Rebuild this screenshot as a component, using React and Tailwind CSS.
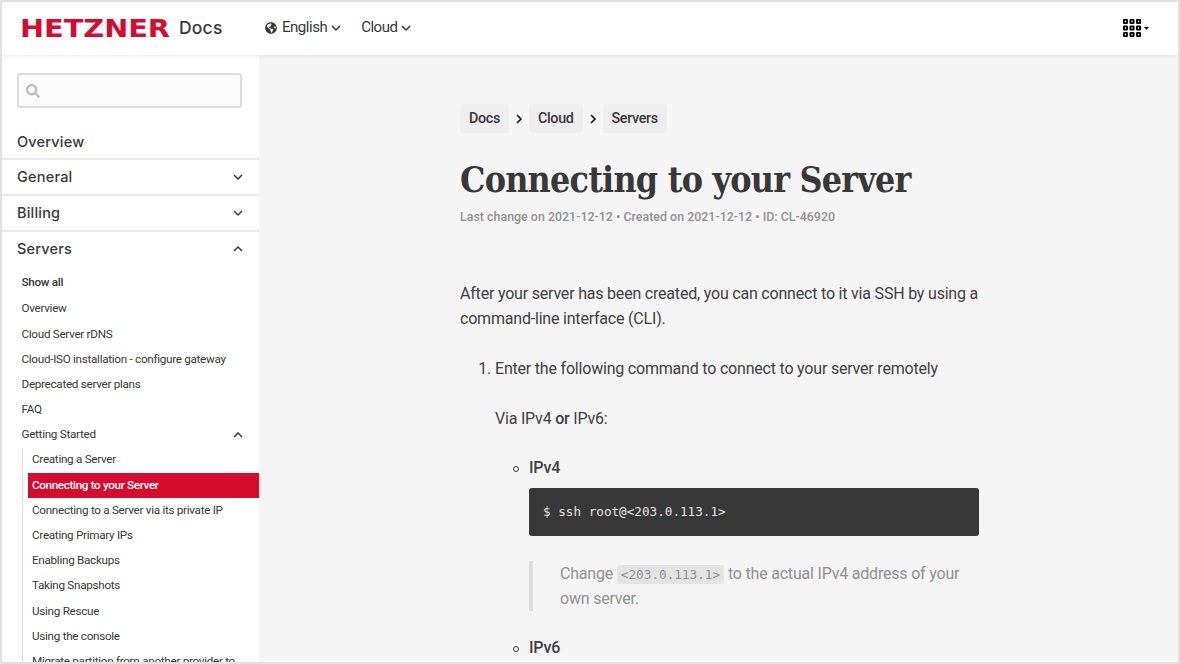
import React from "react";
import { FaSearch, FaGlobeAmericas, FaCaretDown } from "react-icons/fa";

const sections = ["General", "Billing"];

const serverPages = [
  "Overview",
  "Cloud Server rDNS",
  "Cloud-ISO installation - configure gateway",
  "Deprecated server plans",
  "FAQ",
];

const gettingStarted = [
  "Creating a Server",
  "Connecting to your Server",
  "Connecting to a Server via its private IP",
  "Creating Primary IPs",
  "Enabling Backups",
  "Taking Snapshots",
  "Using Rescue",
  "Using the console",
  "Migrate partition from another provider to",
];

function Chevron({ className = "" }) {
  return (
    <svg viewBox="0 0 10 10" className={`h-[10px] w-[10px] shrink-0 ${className}`}>
      <path d="M1 3 L5 7 L9 3" fill="none" stroke="currentColor" strokeWidth="1.5" />
    </svg>
  );
}

function Logo() {
  return (
    <svg width="148" height="20" className="overflow-visible">
      <text
        x="-1"
        y="19"
        textLength="150"
        lengthAdjust="spacingAndGlyphs"
        fill="#d50c2d"
        className="font-['DejaVu_Sans',sans-serif] text-[25px] font-bold"
      >
        HETZNER
      </text>
    </svg>
  );
}

function GridIcon() {
  return (
    <svg width="18" height="18" viewBox="0 0 18 18">
      {[0, 6.5, 13].map((y) =>
        [0, 6.5, 13].map((x) => (
          <rect
            key={`${x}-${y}`}
            x={x + 0.9}
            y={y + 0.9}
            width="3.2"
            height="3.2"
            rx="0.4"
            fill="none"
            stroke="#000"
            strokeWidth="1.9"
          />
        ))
      )}
    </svg>
  );
}

function Header() {
  return (
    <header className="relative z-10 flex h-[53px] shrink-0 items-center bg-white pr-[29px] pb-[2px] pl-[19px] shadow-[0_1px_4px_rgba(0,0,0,0.08)]">
      <Logo />
      <span className="ml-[10px] w-[86px] font-[Inter,sans-serif] text-[17.5px] leading-6 font-medium tracking-[0.2px]">
        Docs
      </span>
      <button className="flex items-center text-[15px] tracking-[-0.48px]">
        <FaGlobeAmericas className="mr-[5px] h-[12px] w-[12px]" />
        English
        <Chevron className="ml-[4px]" />
      </button>
      <button className="ml-5 flex items-center text-[15px] tracking-[-0.48px]">
        Cloud
        <Chevron className="ml-[4px]" />
      </button>
      <button className="ml-auto flex items-center gap-[3px] text-black">
        <GridIcon />
        <FaCaretDown className="h-[8px] w-[5px]" />
      </button>
    </header>
  );
}

function SectionTitle({ title, icon }) {
  return (
    <div className="flex h-[33px] items-center justify-between pr-[16px] pl-[15px] font-[Inter,sans-serif] text-[14.5px] font-medium tracking-[0.2px]">
      {title}
      {icon}
    </div>
  );
}

function Sidebar() {
  return (
    <aside className="w-[257px] shrink-0 overflow-hidden bg-white">
      <div className="mt-[18px] mr-[17px] ml-[15px] flex h-[35px] items-center rounded-[3px] border-2 border-[#dcdcdc] bg-[#fafafa] pl-[7px]">
        <FaSearch className="h-[14px] w-[14px] text-[#bcbcbc]" />
      </div>

      <div className="mt-4">
        <div className="h-[36px] border-b-2 border-[#ebebeb] pt-[1px]">
          <SectionTitle title="Overview" />
        </div>
        {sections.map((title) => (
          <div key={title} className="h-[36px] border-b-2 border-[#ebebeb]">
            <SectionTitle title={title} icon={<Chevron />} />
          </div>
        ))}
        <SectionTitle title="Servers" icon={<Chevron className="rotate-180" />} />
      </div>

      <nav className="text-[11.7px] tracking-[-0.29px]">
        <div className="mt-[3.5px] flex h-[28px] items-center pl-[19.5px] font-medium">Show all</div>
        {serverPages.map((page) => (
          <div key={page} className="flex h-[25.2px] items-center pl-[19.5px] whitespace-nowrap">
            {page}
          </div>
        ))}
        <div className="flex h-[25.2px] items-center justify-between pr-[16px] pl-[19.5px]">
          Getting Started
          <Chevron className="rotate-180" />
        </div>
        <div className="ml-[20px] border-l border-[#dedede] pl-[5px]">
          {gettingStarted.map((page) => (
            <div
              key={page}
              className={`flex h-[25.2px] items-center pl-[4px] whitespace-nowrap ${
                page === "Connecting to your Server" ? "bg-[#d50c2d] font-medium tracking-[-0.35px] text-white" : ""
              }`}
            >
              {page}
            </div>
          ))}
        </div>
      </nav>
    </aside>
  );
}

function Breadcrumbs() {
  return (
    <div className="flex items-center text-[14.3px] font-medium tracking-[-0.32px]">
      {["Docs", "Cloud", "Servers"].map((crumb, index) => (
        <React.Fragment key={crumb}>
          {index > 0 && <Chevron className="mx-[5px] -rotate-90 text-black" />}
          <a className="flex h-[29px] items-center rounded-[3px] bg-[#eeeeee] px-[9px]">{crumb}</a>
        </React.Fragment>
      ))}
    </div>
  );
}

function BulletTitle({ title }) {
  return (
    <div className="flex items-center pl-[18px] font-medium">
      <span className="mt-[2px] mr-[10px] h-[6px] w-[6px] rounded-full border border-[#383838]" />
      {title}
    </div>
  );
}

function Article() {
  return (
    <main className="flex-1 overflow-hidden bg-[#f5f5f5] pt-[49px] pl-[201px]">
      <div className="w-[521px]">
        <Breadcrumbs />
        <h1 className="mt-[22px] font-['DejaVu_Serif_Condensed','DejaVu_Serif',serif] text-[35.5px] leading-[50px] font-bold tracking-[-0.8px] whitespace-nowrap">
          Connecting to your Server
        </h1>
        <p className="mt-[2px] text-[12.4px] leading-[20px] font-medium tracking-[0.02px] whitespace-nowrap text-[#919191]">
          Last change on 2021-12-12 • Created on 2021-12-12 • ID: CL-46920
        </p>

        <div className="mt-[54px] text-[16px] leading-[25px] tracking-[-0.2px] text-[#404040]">
          <p>After your server has been created, you can connect to it via SSH by using a command-line interface (CLI).</p>
          <div className="mt-[25px] flex">
            <span className="w-[35px] pr-[4px] text-right">1.</span>
            <div className="flex-1">
              <p>Enter the following command to connect to your server remotely</p>
              <p className="mt-[25px]">
                Via IPv4 <b className="font-medium">or</b> IPv6:
              </p>
              <ul className="mt-[24px]">
                <li>
                  <BulletTitle title="IPv4" />
                  <pre className="mt-[8px] mr-[2px] ml-[34px] flex h-[48px] items-center rounded-[3px] bg-[#383838] pb-[1px] pl-[14px] font-['DejaVu_Sans_Mono',monospace] text-[12.65px] tracking-normal text-[#e4e4e4]">
                    $ ssh root@&lt;203.0.113.1&gt;
                  </pre>
                  <blockquote className="mt-[25px] ml-[34px] border-l-[4px] border-[#dddddd] pl-[27px] text-[#919191]">
                    Change{" "}
                    <code className="rounded-[3px] bg-[#e3e3e3] px-[4px] py-[2px] font-['DejaVu_Sans_Mono',monospace] text-[12.7px] leading-none tracking-normal">
                      &lt;203.0.113.1&gt;
                    </code>{" "}
                    to the actual IPv4 address of your own server.
                  </blockquote>
                </li>
                <li className="mt-[24px]">
                  <BulletTitle title="IPv6" />
                </li>
              </ul>
            </div>
          </div>
        </div>
      </div>
    </main>
  );
}

export default function App() {
  return (
    <div className="flex h-[664px] w-[1180px] flex-col overflow-hidden border-2 border-[#e1e1e1] font-[Roboto,sans-serif] text-[#383838]">
      <Header />
      <div className="flex min-h-0 flex-1">
        <Sidebar />
        <Article />
      </div>
    </div>
  );
}
